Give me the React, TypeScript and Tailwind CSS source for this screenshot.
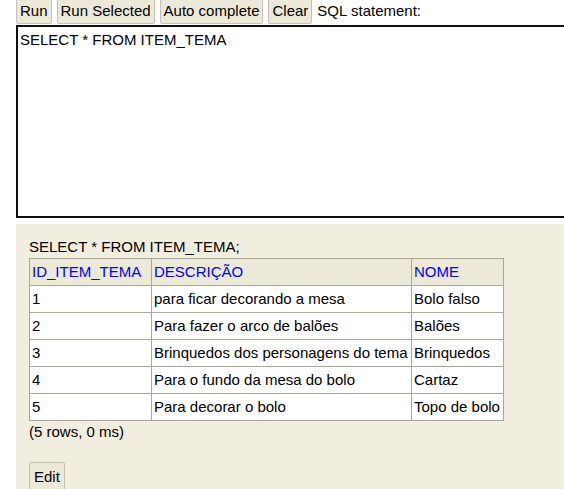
const rows = [
  { id: "1", desc: "para ficar decorando a mesa", nome: "Bolo falso" },
  { id: "2", desc: "Para fazer o arco de balões", nome: "Balões" },
  { id: "3", desc: "Brinquedos dos personagens do tema", nome: "Brinquedos" },
  { id: "4", desc: "Para o fundo da mesa do bolo", nome: "Cartaz" },
  { id: "5", desc: "Para decorar o bolo", nome: "Topo de bolo" },
];

const Btn = ({ children }: { children: React.ReactNode }) => (
  <button className="h-[28px] px-[3px] bg-[#ece9d8] border border-[#c4c1b2] rounded-[2px] text-black leading-[17px]">
    {children}
  </button>
);

export default function App() {
  return (
    <div className="font-['Liberation_Sans',Arial,sans-serif] text-[15px] text-black bg-white h-[489px] overflow-hidden">
      <div className="pl-4">
        <div className="flex items-center gap-[5px] -mt-[4px]">
          <Btn>Run</Btn>
          <Btn>Run Selected</Btn>
          <Btn>Auto complete</Btn>
          <Btn>Clear</Btn>
          <span className="leading-[17px]">SQL statement:</span>
        </div>
        <div className="mt-[1px] w-[600px] h-[193px] border-2 border-[#111] px-[2px] py-[4px] leading-[17px]">
          SELECT * FROM ITEM_TEMA
        </div>
      </div>
      <div className="ml-4 mt-[6px] bg-[#f1eee0] pl-[13px] pt-[14px] h-[300px]">
        <div className="leading-[17px]">SELECT * FROM ITEM_TEMA;</div>
        <table className="mt-[3px] border-collapse bg-white">
          <thead>
            <tr className="bg-[#ece9d8] text-[#0000ff]">
              <th className="w-[122px] border border-[#aca899] px-[2px] py-[4px] font-normal text-left leading-[18px] whitespace-nowrap">ID_ITEM_TEMA</th>
              <th className="w-[260px] border border-[#aca899] px-[2px] py-[4px] font-normal text-left leading-[18px] whitespace-nowrap">DESCRIÇÃO</th>
              <th className="w-[92px] border border-[#aca899] px-[2px] py-[4px] font-normal text-left leading-[18px] whitespace-nowrap">NOME</th>
            </tr>
          </thead>
          <tbody>
            {rows.map((r) => (
              <tr key={r.id}>
                <td className="border border-[#aca899] px-[2px] py-[4px] leading-[18px] whitespace-nowrap">{r.id}</td>
                <td className="border border-[#aca899] px-[2px] py-[4px] leading-[18px] whitespace-nowrap">{r.desc}</td>
                <td className="border border-[#aca899] px-[2px] py-[4px] leading-[18px] whitespace-nowrap">{r.nome}</td>
              </tr>
            ))}
          </tbody>
        </table>
        <div className="mt-[2px] leading-[17px]">(5 rows, 0 ms)</div>
        <button className="mt-[22px] h-[28px] px-[4px] bg-[#ece9d8] border border-[#c4c1b2] rounded-[2px] leading-[17px]">
          Edit
        </button>
      </div>
    </div>
  );
}
